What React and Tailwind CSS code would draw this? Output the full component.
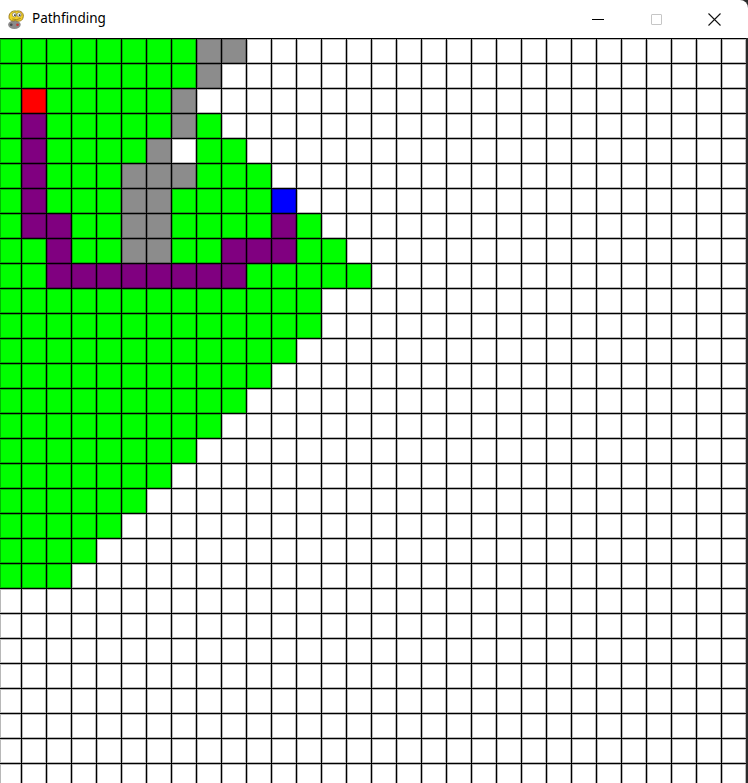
import React from "react";

const ROWS = [
  "GGGGGGGGXXWWWWWWWWWWWWWWWWWWWW",
  "GGGGGGGGXWWWWWWWWWWWWWWWWWWWWW",
  "GRGGGGGXWWWWWWWWWWWWWWWWWWWWWW",
  "GPGGGGGXGWWWWWWWWWWWWWWWWWWWWW",
  "GPGGGGXWGGWWWWWWWWWWWWWWWWWWWW",
  "GPGGGXXXGGGWWWWWWWWWWWWWWWWWWW",
  "GPGGGXXGGGGBWWWWWWWWWWWWWWWWWW",
  "GPPGGXXGGGGPGWWWWWWWWWWWWWWWWW",
  "GGPGGXXGGPPPGGWWWWWWWWWWWWWWWW",
  "GGPPPPPPPPGGGGGWWWWWWWWWWWWWWW",
  "GGGGGGGGGGGGGWWWWWWWWWWWWWWWWW",
  "GGGGGGGGGGGGGWWWWWWWWWWWWWWWWW",
  "GGGGGGGGGGGGWWWWWWWWWWWWWWWWWW",
  "GGGGGGGGGGGWWWWWWWWWWWWWWWWWWW",
  "GGGGGGGGGGWWWWWWWWWWWWWWWWWWWW",
  "GGGGGGGGGWWWWWWWWWWWWWWWWWWWWW",
  "GGGGGGGGWWWWWWWWWWWWWWWWWWWWWW",
  "GGGGGGGWWWWWWWWWWWWWWWWWWWWWWW",
  "GGGGGGWWWWWWWWWWWWWWWWWWWWWWWW",
  "GGGGGWWWWWWWWWWWWWWWWWWWWWWWWW",
  "GGGGWWWWWWWWWWWWWWWWWWWWWWWWWW",
  "GGGWWWWWWWWWWWWWWWWWWWWWWWWWWW",
  "WWWWWWWWWWWWWWWWWWWWWWWWWWWWWW",
  "WWWWWWWWWWWWWWWWWWWWWWWWWWWWWW",
  "WWWWWWWWWWWWWWWWWWWWWWWWWWWWWW",
  "WWWWWWWWWWWWWWWWWWWWWWWWWWWWWW",
  "WWWWWWWWWWWWWWWWWWWWWWWWWWWWWW",
  "WWWWWWWWWWWWWWWWWWWWWWWWWWWWWW",
  "WWWWWWWWWWWWWWWWWWWWWWWWWWWWWW",
  "WWWWWWWWWWWWWWWWWWWWWWWWWWWWWW",
];

const COLOR = {
  G: "bg-[#00ff00]",
  W: "bg-white",
  X: "bg-[#8c8c8c]",
  R: "bg-[#ff0000]",
  P: "bg-[#800080]",
  B: "bg-[#0000ff]",
};

function PygameIcon() {
  return (
    <svg width="21" height="21" viewBox="0 0 20 20">
      <ellipse cx="8" cy="15" rx="6" ry="4" fill="#8a8a8a" />
      <circle cx="5" cy="15" r="1.3" fill="#4a4a4a" />
      <circle cx="11" cy="15" r="1.3" fill="#c33" />
      <path d="M3 9 C2 4 6 1 10 2 C14 1 18 4 16 9 C15 12 11 12 9 11 C6 12 4 11 3 9 Z" fill="#f2cf2a" stroke="#8a6d10" strokeWidth="0.8" />
      <circle cx="8" cy="5.5" r="2" fill="#fff" stroke="#555" strokeWidth="0.5" />
      <circle cx="12.5" cy="5.5" r="2" fill="#fff" stroke="#555" strokeWidth="0.5" />
      <circle cx="8.5" cy="5.8" r="0.9" fill="#222" />
      <circle cx="12.9" cy="5.8" r="0.9" fill="#222" />
      <path d="M6 9.5 Q10 11 14 9" fill="none" stroke="#8a6d10" strokeWidth="0.7" />
    </svg>
  );
}

export default function App() {
  return (
    <div className="w-[748px] h-[783px] overflow-hidden bg-white flex flex-col relative" style={{ fontFamily: '"Noto Sans", "Open Sans", sans-serif' }}>
      <div className="h-[38px] shrink-0 flex items-center bg-white relative">
        <div className="ml-[6px] flex items-center">
          <PygameIcon />
        </div>
        <span className="ml-[5px] text-[13.5px] text-black leading-none mb-[1px]">Pathfinding</span>
        <div className="ml-auto mr-[5px] flex items-center h-full">
          <div className="w-[58px] h-full flex items-center justify-center">
            <div className="w-[12px] h-px bg-black"></div>
          </div>
          <div className="w-[58px] h-full flex items-center justify-center">
            <div className="w-[11px] h-[11px] border border-[#c6c6c6] rounded-[1px]"></div>
          </div>
          <div className="w-[58px] h-full flex items-center justify-center">
            <svg width="13" height="13" viewBox="0 0 13 13">
              <path d="M0.5 0.5 L12.5 12.5 M12.5 0.5 L0.5 12.5" stroke="#111" strokeWidth="1.1" />
            </svg>
          </div>
        </div>
        <div className="absolute right-0 top-0 w-[8px] h-[10px] bg-[#2a2a2a]">
          <div className="w-full h-full bg-white rounded-tr-[8px]"></div>
        </div>
      </div>
      <div className="flex-1 flex overflow-hidden">
        <div className="w-[746px] shrink-0 bg-black pt-px grid grid-cols-[21px_repeat(29,24px)] auto-rows-[24px] gap-px content-start">
          {ROWS.map((row, r) =>
            row.split("").map((c, ci) => (
              <div key={r + "-" + ci} className={COLOR[c] + " shadow-[inset_0_0_0_1px_rgba(0,0,0,0.28)]"}></div>
            ))
          )}
        </div>
        <div className="w-[2px] shrink-0 bg-[#2a2a2a]"></div>
      </div>
    </div>
  );
}
